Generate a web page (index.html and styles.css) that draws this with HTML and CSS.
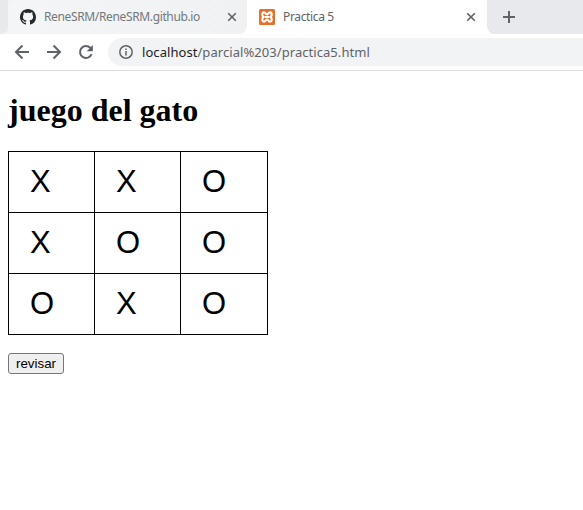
FILE: index.html
```html
<!DOCTYPE html>
<html lang="es">
<head>
<meta charset="utf-8">
<title>Practica 5</title>
<link rel="stylesheet" href="styles.css">
</head>
<body>
<header class="browser">
  <div class="tabstrip">
    <div class="strip-start"></div>
    <div class="tab tab-hover">
      <svg class="favicon" viewBox="0 0 16 16"><path fill="#24292e" d="M8 0C3.58 0 0 3.58 0 8c0 3.54 2.29 6.53 5.47 7.59.4.07.55-.17.55-.38 0-.19-.01-.82-.01-1.49-2.01.37-2.53-.49-2.69-.94-.09-.23-.48-.94-.82-1.13-.28-.15-.68-.52-.01-.53.63-.01 1.08.58 1.23.82.72 1.21 1.87.87 2.33.66.07-.52.28-.87.51-1.07-1.78-.2-3.64-.89-3.64-3.95 0-.87.31-1.59.82-2.15-.08-.2-.36-1.02.08-2.12 0 0 .67-.21 2.2.82.64-.18 1.32-.27 2-.27s1.36.09 2 .27c1.53-1.04 2.2-.82 2.2-.82.44 1.1.16 1.92.08 2.12.51.56.82 1.27.82 2.15 0 3.07-1.87 3.75-3.65 3.95.29.25.54.73.54 1.48 0 1.07-.01 1.93-.01 2.2 0 .21.15.46.55.38A8.01 8.01 0 0 0 16 8c0-4.42-3.58-8-8-8z"/></svg>
      <span class="tab-title title-github">ReneSRM/ReneSRM.github.io</span>
      <svg class="close" viewBox="0 0 10 10"><path d="M1.2 1.2l7.6 7.6M8.8 1.2L1.2 8.8"/></svg>
    </div>
    <div class="tab tab-active">
      <svg class="favicon" viewBox="0 0 16 16"><rect width="16" height="16" rx="1.5" fill="#e5702a"/><path fill="none" stroke="#fff" stroke-width="2.1" stroke-linejoin="round" d="M5 3.4C3 3.4 2.7 6 4.2 8 2.7 10 3 12.6 5 12.6S6.5 10.6 8 10.6 9 12.6 11 12.6 13.3 10 11.8 8C13.3 6 13 3.4 11 3.4S9.5 5.4 8 5.4 7 3.4 5 3.4zM5.5 8h5"/></svg>
      <span class="tab-title title-active">Practica 5</span>
      <svg class="close" viewBox="0 0 10 10"><path d="M1.2 1.2l7.6 7.6M8.8 1.2L1.2 8.8"/></svg>
    </div>
    <div class="strip-end">
      <svg class="plus" viewBox="0 0 12 12"><path d="M6 0v12M0 6h12"/></svg>
    </div>
  </div>
  <div class="toolbar">
    <svg class="nav" viewBox="0 0 16 16"><path d="M15 8H2M8.5 1.5L2 8l6.5 6.5"/></svg>
    <svg class="nav" viewBox="0 0 16 16"><path d="M1 8h13M7.5 1.5L14 8l-6.5 6.5"/></svg>
    <svg class="nav" viewBox="0 0 16 16"><path d="M13.6 10.2A6 6 0 1 1 12.3 3.8L14 5.5"/><path class="solid" d="M14.9 1v6.2H8.7z"/></svg>
    <div class="address">
      <svg class="info" viewBox="0 0 14 14"><circle cx="7" cy="7" r="6.2"/><path d="M7 6v4.5M7 3.4v1.5"/></svg>
      <span class="url"><span class="host">localhost</span>/parcial%203/practica5.html</span>
    </div>
  </div>
</header>
<main class="page">
  <h1>juego del gato</h1>
  <div class="board">
    <div class="cell">X</div><div class="cell">X</div><div class="cell">O</div>
    <div class="cell">X</div><div class="cell">O</div><div class="cell">O</div>
    <div class="cell">O</div><div class="cell">X</div><div class="cell">O</div>
  </div>
  <button class="check" type="button">revisar</button>
</main>
</body>
</html>
```
FILE: styles.css
```css
* { box-sizing: border-box; }
body { margin: 0; background: #fff; overflow: hidden; }
svg { display: block; flex: none; }

.browser { font-family: "Noto Sans", sans-serif; color: #5f6368; height: 71px; border-bottom: 1px solid #d9dadc; }
.tabstrip { display: flex; height: 34px; background: linear-gradient(90deg, #f1f3f4 0 100px, #fff 240px); }
.strip-start { width: 8px; background: #e8e9ed; border-bottom-right-radius: 8px; }
.tab { display: flex; align-items: center; padding: 0 11px 0 12px; }
.tab-hover { width: 239px; padding-right: 10px; background: linear-gradient(90deg, #f3f5f6, #eff1f3); border-radius: 8px 0 8px 0; }
.tab-active { width: 240px; background: #fff; border-radius: 8px 8px 0 0; }
.favicon { width: 16px; height: 16px; margin-right: 8px; }
.tab-title { flex: 1; font-size: 12px; line-height: 16px; letter-spacing: -.36px; white-space: nowrap; }
.title-github { color: #74777b; }
.close { width: 10px; height: 10px; fill: none; stroke: #5f6368; stroke-width: 1.6; }
.strip-end { flex: 1; background: #e8e9ed; border-bottom-left-radius: 8px; padding: 11px 0 0 16px; }
.plus { width: 12px; height: 12px; fill: none; stroke: #5f6368; stroke-width: 2; }

.toolbar { display: flex; align-items: center; height: 36px; padding-left: 14px; gap: 16px; background: #fff; }
.nav { width: 16px; height: 16px; fill: none; stroke: #5f6368; stroke-width: 2; }
.nav .solid { fill: #5f6368; stroke: none; }
.address { display: flex; align-items: center; flex: 1; height: 28px; margin-left: -2px; padding-left: 11px; gap: 9px; background: #f1f3f4; border-radius: 14px 0 0 14px; }
.info { width: 14px; height: 14px; fill: none; stroke: #5f6368; stroke-width: 1.5; }
.url { font-size: 13px; line-height: 18px; letter-spacing: .06px; white-space: nowrap; }
.host { color: #202124; }

.page { padding: 21px 8px 0; }
h1 { margin: 0; font: bold 32px/36px "Liberation Serif", serif; color: #000; }
.board { display: grid; grid-template-columns: 86px 86px 87px; grid-auto-rows: 61px; width: 260px; margin-top: 23px; border: solid #000; border-width: 1px 0 0 1px; }
.cell { border: solid #000; border-width: 0 1px 1px 0; padding-left: 21px; font: 31px/60px "Liberation Sans", sans-serif; color: #000; }
.check { display: block; width: 56px; height: 21px; margin-top: 18px; padding: 0; border: 1px solid #767676; border-radius: 3px; background: #efefef; font: 13.333px/18px "Liberation Sans", sans-serif; color: #000; }
```
